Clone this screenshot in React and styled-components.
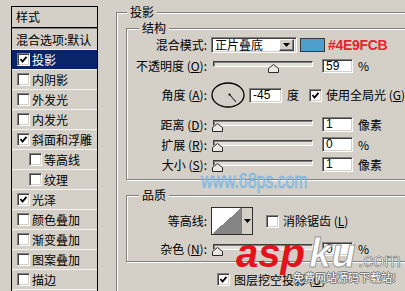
import React from "react";
import styled, { createGlobalStyle } from "styled-components";

const Global = createGlobalStyle`
  html, body { margin: 0; padding: 0; background: #d4d0c8; }
  body {
    width: 405px; height: 291px; overflow: hidden;
    font-family: "Noto Sans CJK SC", "Noto Sans", sans-serif;
    font-size: 12px; color: #000;
  }
  #root { width: 405px; height: 291px; overflow: hidden; }
`;

const Page = styled.div`
  position: relative;
  display: flex;
  align-items: flex-start;
  width: 405px;
  height: 291px;
  overflow: hidden;
  padding-left: 11px;
  box-sizing: border-box;
`;

/* ---------- left style list ---------- */
const StyleList = styled.div`
  flex: none;
  width: 87px;
  height: 320px;
  margin-top: 6px;
  border: 1px solid #000;
  box-sizing: border-box;
`;

const ListHeader = styled.div`
  height: 20px;
  line-height: 20px;
  padding-left: 4px;
  border-bottom: 1px solid #000;
  box-shadow: 0 1px 0 #808080;
`;

const ListBody = styled.div`
  margin-top: 2px;
`;

const ListRow = styled.div`
  display: flex;
  align-items: center;
  gap: 2px;
  height: 20px;
  box-sizing: border-box;
  padding-left: ${(p) => (p.$plain ? 4 : p.$indent ? 17 : 5)}px;
  border-bottom: 1px solid #f4f3ef;
  background: ${(p) => (p.$selected ? "#0a246a" : "transparent")};
  color: ${(p) => (p.$selected ? "#fff" : "#000")};
  white-space: nowrap;
  line-height: 14px;
`;

/* ---------- common controls ---------- */
const Box = styled.span`
  display: inline-flex;
  flex: none;
  align-items: center;
  justify-content: center;
  width: 13px;
  height: 13px;
  box-sizing: border-box;
  border: 1px solid;
  border-color: #808080 #fff #fff #808080;
  box-shadow: inset 1px 1px 0 #404040, inset -1px -1px 0 #d4d0c8;
  background: #fff;
  margin-left: ${(p) => p.$ml || 0}px;
`;

const CheckBox = ({ checked, ml }) => (
  <Box $ml={ml}>
    {checked && (
      <svg width="9" height="9" viewBox="0 0 9 9">
        <polyline points="1.5,4 3.5,6.5 7.5,1.8" fill="none" stroke="#000" strokeWidth="1.8" />
      </svg>
    )}
  </Box>
);

const Fieldset = styled.fieldset`
  flex: none;
  min-width: 0;
  box-sizing: border-box;
  width: ${(p) => p.$w}px;
  ${(p) => (p.$h ? `height: ${p.$h}px;` : "")}
  margin: ${(p) => p.$mt}px 0 0 ${(p) => p.$ml}px;
  padding: 0 0 ${(p) => p.$pb || 0}px 0;
  border: 1px solid #808080;
  box-shadow: inset 1px 1px 0 #fff, 1px 1px 0 #fff;
`;

const Legend = styled.legend`
  margin-left: ${(p) => p.$ml}px;
  padding: 0 3px;
  height: 14px;
  line-height: 14px;
  background: #d4d0c8;
`;

const FieldRow = styled.div`
  display: grid;
  grid-template-columns: 80px auto;
  column-gap: 4px;
  align-items: center;
  height: ${(p) => p.$h}px;
  margin-top: ${(p) => p.$mt}px;
`;

const Label = styled.span`
  justify-self: end;
  white-space: nowrap;
  line-height: 14px;
`;

const Controls = styled.div`
  display: flex;
  align-items: center;
  white-space: nowrap;
`;

const Sunken = styled.div`
  box-sizing: border-box;
  border: 1px solid;
  border-color: #808080 #fff #fff #808080;
  box-shadow: inset 1px 1px 0 #404040, inset -1px -1px 0 #d4d0c8;
  background: #fff;
`;

const Select = styled(Sunken)`
  display: flex;
  align-items: center;
  width: 86px;
  height: 16px;
  padding: 0 2px 0 3px;
  line-height: 12px;
`;

const DropBtn = styled.span`
  margin-left: auto;
  display: flex;
  align-items: center;
  justify-content: center;
  width: 15px;
  height: 12px;
  box-sizing: border-box;
  background: #d4d0c8;
  border: 1px solid;
  border-color: #fff #404040 #404040 #fff;
  box-shadow: inset -1px -1px 0 #808080;
`;

const Arrow = () => (
  <svg width="7" height="4" viewBox="0 0 7 4">
    <polygon points="0,0 7,0 3.5,4" fill="#000" />
  </svg>
);

const Swatch = styled.span`
  margin-left: 3px;
  width: 25px;
  height: 14px;
  box-sizing: border-box;
  border: 1px solid #3a3a3a;
  background: #4e9fcb;
`;

const HexText = styled.span`
  margin-left: 3px;
  font-family: "Liberation Sans", Arial, sans-serif;
  font-weight: bold;
  font-size: 14px;
  letter-spacing: -0.3px;
  color: #e8232b;
`;

const SliderBox = styled.div`
  position: relative;
  margin-left: 2px;
  width: 100px;
  height: 14px;
  flex: none;
`;

const Track = styled.div`
  margin-top: 2px;
  height: 6px;
  box-sizing: border-box;
  border: 1px solid;
  border-color: #404040 #fff #fff #404040;
  box-shadow: inset 1px 1px 0 #808080;
  background: #e2dfd8;
`;

const Thumb = styled.svg`
  position: absolute;
  top: 5px;
`;

const Slider = ({ value }) => (
  <SliderBox>
    <Track />
    <Thumb width="11" height="9" viewBox="0 0 11 9" style={{ left: -1 + value * 0.95 }}>
      <polygon points="5.5,0.5 10.5,4.5 10.5,8.5 0.5,8.5 0.5,4.5" fill="#ebe9e3" stroke="#2a2a2a" strokeWidth="1" />
    </Thumb>
  </SliderBox>
);

const NumInput = styled(Sunken)`
  margin-left: ${(p) => p.$ml}px;
  width: ${(p) => p.$w || 31}px;
  height: ${(p) => p.$h || 15}px;
  padding-left: 3px;
  font-family: "Liberation Sans", Arial, sans-serif;
  font-size: 12px;
  line-height: ${(p) => (p.$h || 15) - 2}px;
  flex: none;
`;

const Unit = styled.span`
  margin-left: ${(p) => p.$ml || 5}px;
  line-height: 14px;
`;

const Dial = () => (
  <svg width="34" height="26" viewBox="0 0 34 26">
    <ellipse cx="17" cy="13" rx="16" ry="12" fill="none" stroke="#000" strokeWidth="1.3" />
    <line x1="18.5" y1="12.5" x2="25" y2="20" stroke="#000" strokeWidth="1" />
    <circle cx="18.5" cy="12.5" r="1.1" fill="#000" />
  </svg>
);

const ContourBox = styled.div`
  display: flex;
  width: 42px;
  height: 28px;
  box-sizing: border-box;
  border: 1px solid #2e2e2e;
`;

const ContourGraph = styled.div`
  flex: 1;
  background: linear-gradient(to bottom right, #fff 50%, #858585 50%);
`;

const ContourArrow = styled.div`
  width: 10px;
  display: flex;
  align-items: center;
  justify-content: center;
  border-left: 1px solid #808080;
  background: #d4d0c8;
`;

const KnockoutRow = styled.div`
  display: flex;
  align-items: center;
  gap: 4px;
  height: 15px;
  margin: 10px 0 0 100px;
  white-space: nowrap;
  line-height: 14px;
`;

/* ---------- watermarks (overlay) ---------- */
const Overlay = styled.div`
  position: absolute;
  inset: 0;
  pointer-events: none;
`;

const SiteMark = styled.div`
  position: absolute;
  left: 201px;
  top: 169px;
  font-family: "Liberation Sans", Arial, sans-serif;
  font-size: 22px;
  line-height: 24px;
  color: #9ccdf0;
  -webkit-text-stroke: 0.6px #5fa6dc;
  transform: scaleX(0.72);
  transform-origin: left top;
  white-space: nowrap;
  opacity: 0.9;
`;

const Logo = styled.div`
  position: absolute;
  left: 236px;
  top: 233px;
  font-family: "Liberation Sans", Arial, sans-serif;
  font-weight: bold;
  font-style: italic;
  font-size: 40px;
  line-height: 40px;
  white-space: nowrap;
`;

const LogoRed = styled.span`
  color: #e3131b;
`;

const LogoWhite = styled.span`
  margin-left: 4px;
  color: #fff;
  -webkit-text-stroke: 1px #9a9a9a;
`;

const LogoCom = styled.span`
  margin-left: 2px;
  font-size: 20px;
  font-style: normal;
  font-weight: normal;
  color: #f4f4f4;
  -webkit-text-stroke: 0.7px #808080;
`;

const Slogan = styled.div`
  position: absolute;
  left: 293px;
  top: 270px;
  font-size: 11px;
  line-height: 14px;
  color: #fff;
  white-space: nowrap;
  text-shadow: 1px 0 0 #6a6a6a, -1px 0 0 #6a6a6a, 0 1px 0 #6a6a6a, 0 -1px 0 #6a6a6a;
`;

const listItems = [
  { label: "投影", checked: true, selected: true },
  { label: "内阴影" },
  { label: "外发光" },
  { label: "内发光" },
  { label: "斜面和浮雕", checked: true },
  { label: "等高线", indent: true },
  { label: "纹理", indent: true },
  { label: "光泽", checked: true },
  { label: "颜色叠加" },
  { label: "渐变叠加" },
  { label: "图案叠加" },
  { label: "描边" },
];

const sliderRows = [
  { label: "距离", key: "D", value: 0, num: "1", unit: "像素", mt: 9 },
  { label: "扩展", key: "R", value: 0, num: "0", unit: "%", mt: 5 },
  { label: "大小", key: "S", value: 0, num: "1", unit: "像素", mt: 5 },
];

export default function App() {
  return (
    <>
      <Global />
      <Page>
        <StyleList>
          <ListHeader>样式</ListHeader>
          <ListBody>
            <ListRow $plain>混合选项:默认</ListRow>
            {listItems.map((it) => (
              <ListRow key={it.label} $indent={it.indent} $selected={it.selected}>
                <CheckBox checked={it.checked} />
                <span>{it.label}</span>
              </ListRow>
            ))}
          </ListBody>
        </StyleList>

        <Fieldset $w={330} $h={320} $mt={5} $ml={18}>
          <Legend $ml={10}>投影</Legend>

          <Fieldset $w={300} $mt={2} $ml={9} $pb={7}>
            <Legend $ml={12}>结构</Legend>
            <FieldRow $h={16} $mt={2}>
              <Label>混合模式:</Label>
              <Controls>
                <Select>
                  <span>正片叠底</span>
                  <DropBtn>
                    <Arrow />
                  </DropBtn>
                </Select>
                <Swatch />
                <HexText>#4E9FCB</HexText>
              </Controls>
            </FieldRow>
            <FieldRow $h={14} $mt={6}>
              <Label>
                不透明度 (<u>O</u>):
              </Label>
              <Controls>
                <Slider value={59} />
                <NumInput $ml={9} $h={14}>59</NumInput>
                <Unit>%</Unit>
              </Controls>
            </FieldRow>
            <FieldRow $h={26} $mt={9}>
              <Label>
                角度 (<u>A</u>):
              </Label>
              <Controls>
                <Dial />
                <NumInput $ml={4} $w={33} $h={15}>-45</NumInput>
                <Unit>度</Unit>
                <CheckBox checked ml={10} />
                <Unit $ml={4}>
                  使用全局光 (<u>G</u>)
                </Unit>
              </Controls>
            </FieldRow>
            {sliderRows.map((r) => (
              <FieldRow key={r.label} $h={15} $mt={r.mt}>
                <Label>
                  {r.label} (<u>{r.key}</u>):
                </Label>
                <Controls>
                  <Slider value={r.value} />
                  <NumInput $ml={9}>{r.num}</NumInput>
                  <Unit>{r.unit}</Unit>
                </Controls>
              </FieldRow>
            ))}
          </Fieldset>

          <Fieldset $w={300} $mt={8} $ml={9} $pb={5}>
            <Legend $ml={12}>品质</Legend>
            <FieldRow $h={28} $mt={5}>
              <Label>等高线:</Label>
              <Controls>
                <ContourBox>
                  <ContourGraph />
                  <ContourArrow>
                    <Arrow />
                  </ContourArrow>
                </ContourBox>
                <CheckBox ml={13} />
                <Unit $ml={4}>
                  消除锯齿 (<u>L</u>)
                </Unit>
              </Controls>
            </FieldRow>
            <FieldRow $h={14} $mt={7}>
              <Label>
                杂色 (<u>N</u>):
              </Label>
              <Controls>
                <Slider value={0} />
                <NumInput $ml={9} $h={14}>0</NumInput>
                <Unit>%</Unit>
              </Controls>
            </FieldRow>
          </Fieldset>

          <KnockoutRow>
            <CheckBox checked />
            <span>
              图层挖空投影 (<u>U</u>)
            </span>
          </KnockoutRow>
        </Fieldset>

        <Overlay>
          <SiteMark>www.68ps.com</SiteMark>
          <Logo>
            <LogoRed>asp</LogoRed>
            <LogoWhite>ku</LogoWhite>
            <LogoCom>.com</LogoCom>
          </Logo>
          <Slogan>免费网站源码下载站!</Slogan>
        </Overlay>
      </Page>
    </>
  );
}
